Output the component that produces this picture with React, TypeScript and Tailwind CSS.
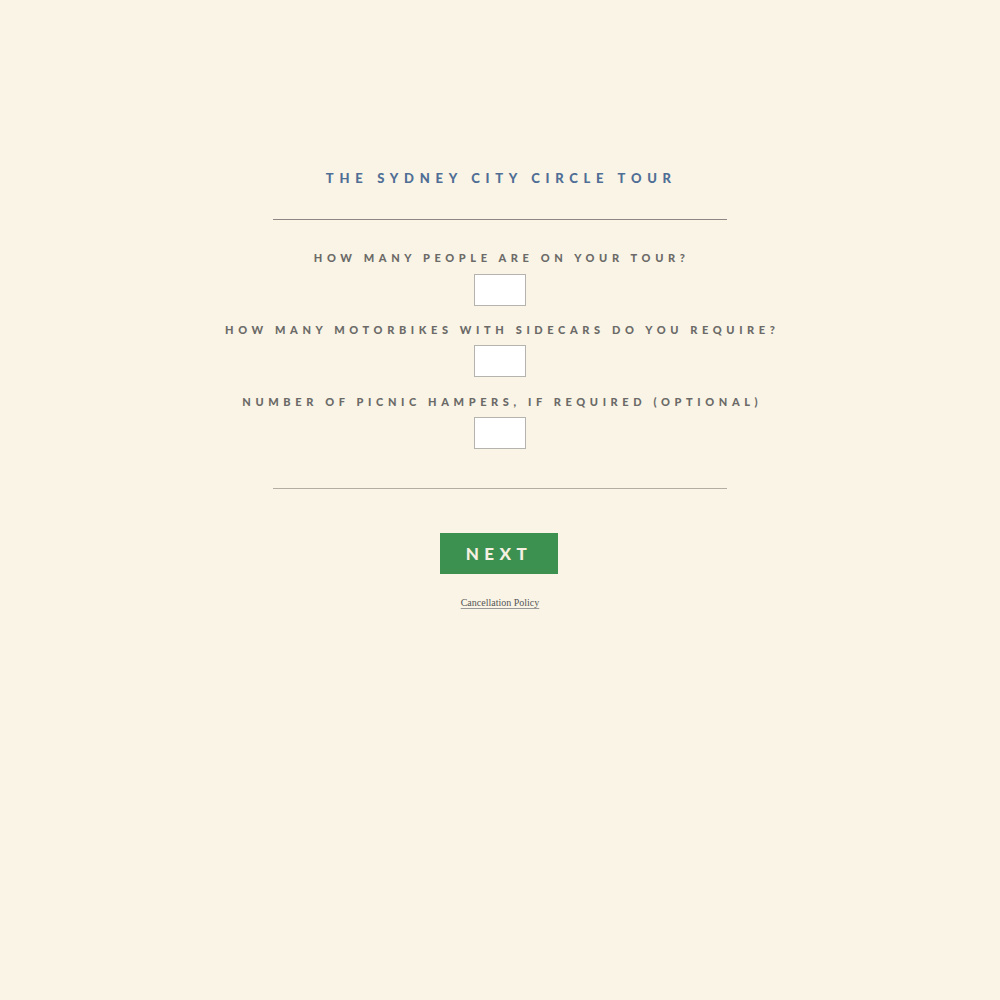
export default function App() {
  const labelCls =
    "h-[14px] leading-[14px] text-[11px] font-black tracking-[0.42em] text-[#6b6a68] uppercase whitespace-nowrap";
  const inputCls = "w-[52px] h-[32px] bg-white border border-[#b5b3ae] outline-none";
  return (
    <div
      className="min-h-[1000px] w-full bg-[#f9f4e5] flex flex-col items-center pt-[170px]"
      style={{ fontFamily: "Lato, 'Liberation Sans', sans-serif" }}
    >
      <h1 className="h-[16px] leading-[16px] text-[13px] font-black tracking-[0.44em] text-[#4f6e96] uppercase pl-[0.2em]">
        The Sydney City Circle Tour
      </h1>
      <div className="mt-[33px] w-[454px] h-px bg-[#8c8782]" />
      <div className={labelCls + " mt-[31px] pl-[0.3em]"}>How many people are on your tour?</div>
      <input className={inputCls + " mt-[9px]"} />
      <div className={labelCls + " mt-[17px] pl-[0.42em]"}>How many motorbikes with sidecars do you require?</div>
      <input className={inputCls + " mt-[8px]"} />
      <div className={labelCls + " mt-[18px] pl-[0.42em]"}>Number of picnic hampers, if required (optional)</div>
      <input className={inputCls + " mt-[8px]"} />
      <div className="mt-[39px] w-[454px] h-px bg-[#b3aca3]" />
      <button className="mt-[44px] w-[118px] h-[41px] bg-[#3d9150] text-[#f5f0e1] text-[17px] font-black tracking-[0.32em] uppercase -translate-x-px">
        Next
      </button>
      <a
        href="#"
        className="mt-[22px] text-[10px] leading-[14px] text-[#555] underline underline-offset-2 decoration-[#999]"
        style={{ fontFamily: "'Liberation Serif', serif" }}
      >
        Cancellation Policy
      </a>
    </div>
  );
}
